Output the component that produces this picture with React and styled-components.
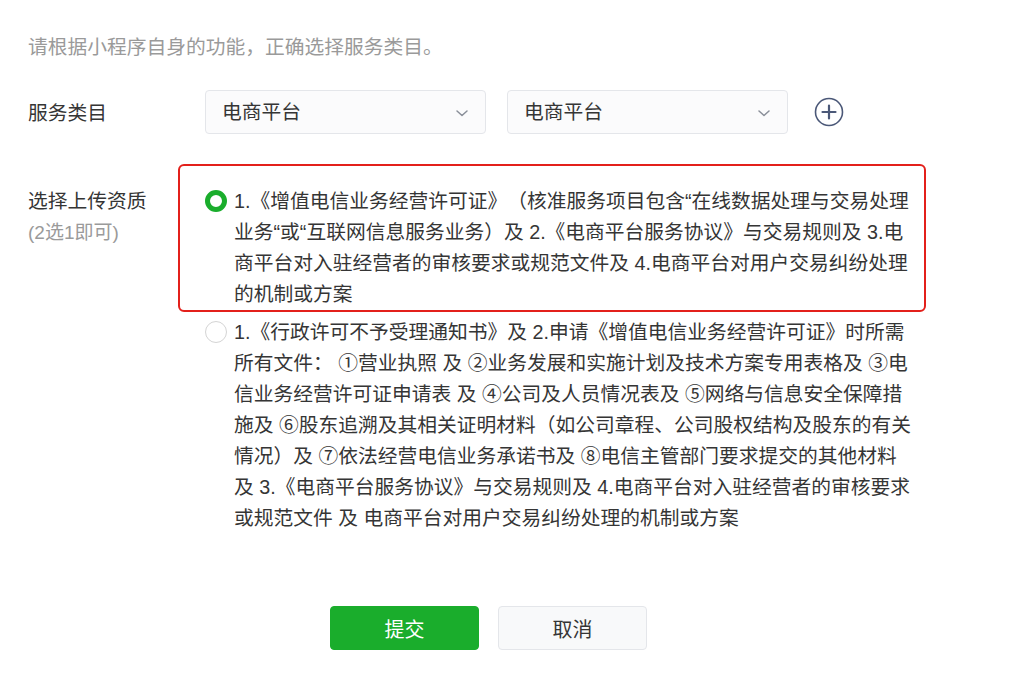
import styled, { createGlobalStyle } from 'styled-components';

const GlobalStyle = createGlobalStyle`
  html, body {
    margin: 0;
    padding: 0;
    background: #ffffff;
  }
  body {
    font-family: "Liberation Sans", "Noto Sans CJK SC", sans-serif;
    color: #353535;
    text-spacing-trim: space-all;
  }
`;

const optionOne = [
  '1.《增值电信业务经营许可证》（核准服务项目包含“在线数据处理与交易处理',
  '业务“或“互联网信息服务业务）及 2.《电商平台服务协议》与交易规则及 3.电',
  '商平台对入驻经营者的审核要求或规范文件及 4.电商平台对用户交易纠纷处理',
  '的机制或方案',
];

const optionTwo = [
  '1.《行政许可不予受理通知书》及 2.申请《增值电信业务经营许可证》时所需',
  '所有文件： ①营业执照 及 ②业务发展和实施计划及技术方案专用表格及 ③电',
  '信业务经营许可证申请表 及 ④公司及人员情况表及 ⑤网络与信息安全保障措',
  '施及 ⑥股东追溯及其相关证明材料（如公司章程、公司股权结构及股东的有关',
  '情况）及 ⑦依法经营电信业务承诺书及 ⑧电信主管部门要求提交的其他材料',
  '及 3.《电商平台服务协议》与交易规则及 4.电商平台对入驻经营者的审核要求',
  '或规范文件 及 电商平台对用户交易纠纷处理的机制或方案',
];

export default function App() {
  return (
    <Page>
      <GlobalStyle />
      <Intro>请根据小程序自身的功能，正确选择服务类目。</Intro>

      <CategoryRow>
        <Label $width="177px">服务类目</Label>
        <Selects>
          <Select>
            <span>电商平台</span>
            <Chevron />
          </Select>
          <Select>
            <span>电商平台</span>
            <Chevron />
          </Select>
          <AddButton aria-label="添加">
            <svg width="30" height="30" viewBox="0 0 30 30">
              <circle cx="15" cy="15" r="13.5" fill="none" stroke="#4b5878" strokeWidth="1.6" />
              <path d="M15 8.5v13M8.5 15h13" stroke="#4b5878" strokeWidth="2.2" strokeLinecap="round" />
            </svg>
          </AddButton>
        </Selects>
      </CategoryRow>

      <UploadRow>
        <UploadLabel>
          <Label>选择上传资质</Label>
          <Hint>(2选1即可)</Hint>
        </UploadLabel>
        <Options>
          <Option $highlight>
            <Radio $checked />
            <OptionText>
              {optionOne.map((line) => (
                <Line key={line}>{line}</Line>
              ))}
            </OptionText>
          </Option>
          <Option>
            <Radio />
            <OptionText>
              {optionTwo.map((line) => (
                <Line key={line}>{line}</Line>
              ))}
            </OptionText>
          </Option>
        </Options>
      </UploadRow>

      <Footer>
        <Button $primary>提交</Button>
        <Button>取消</Button>
      </Footer>
    </Page>
  );
}

function Chevron() {
  return (
    <svg width="14" height="10" viewBox="0 0 14 10">
      <path d="M2 3l5 4.5L12 3" fill="none" stroke="#8a8f99" strokeWidth="1.5" strokeLinecap="round" strokeLinejoin="round" />
    </svg>
  );
}

const Page = styled.div`
  padding: 33px 0 30px 28px;
  font-size: 19.75px;
`;

const Intro = styled.p`
  margin: 0;
  line-height: 28px;
  color: #9a9a9a;
`;

const CategoryRow = styled.div`
  display: flex;
  align-items: center;
  margin-top: 29px;
`;

const Label = styled.div`
  width: ${(p) => p.$width || 'auto'};
  flex: none;
  line-height: 31px;
  padding-top: 2px;
  color: #353535;
`;

const Selects = styled.div`
  display: flex;
  align-items: center;
  gap: 21px;
`;

const Select = styled.div`
  box-sizing: border-box;
  width: 281px;
  height: 44px;
  display: flex;
  align-items: center;
  justify-content: space-between;
  padding: 2px 16px 0 16px;
  border: 1px solid #e4e6ea;
  border-radius: 4px;
  background: #fbfbfc;
  color: #353535;
  line-height: 1;
`;

const AddButton = styled.div`
  display: flex;
  align-items: center;
  margin-left: 5px;
`;

const UploadRow = styled.div`
  display: flex;
  align-items: flex-start;
  margin-top: 30px;
`;

const UploadLabel = styled.div`
  width: 150px;
  flex: none;
  padding-top: 20px;
`;

const Hint = styled.div`
  line-height: 31px;
  font-size: 19px;
  color: #9a9a9a;
`;

const Options = styled.div`
  display: flex;
  flex-direction: column;
  gap: 5px;
`;

const Option = styled.div`
  box-sizing: border-box;
  width: 748px;
  display: flex;
  align-items: flex-start;
  gap: 7px;
  padding: ${(p) => (p.$highlight ? '20px 0 0 25px' : '0 0 0 27px')};
  border: ${(p) => (p.$highlight ? '2.5px solid #e3201b' : 'none')};
  border-radius: 6px;
`;

const Radio = styled.span`
  box-sizing: border-box;
  flex: none;
  width: 22px;
  height: 22px;
  margin-top: 4px;
  border-radius: 50%;
  border: ${(p) => (p.$checked ? '5px solid #1aad2c' : '1px solid #d4d4d4')};
  background: #fff;
`;

const OptionText = styled.div`
  line-height: 31px;
  color: #353535;
`;

const Line = styled.span`
  display: block;
  white-space: nowrap;
`;

const Footer = styled.div`
  display: flex;
  gap: 19px;
  margin-top: 72px;
  padding-left: 302px;
`;

const Button = styled.button`
  box-sizing: border-box;
  width: 149px;
  height: 44px;
  padding-top: 2px;
  border-radius: 4px;
  font-family: inherit;
  font-size: 20px;
  cursor: pointer;
  border: 1px solid ${(p) => (p.$primary ? '#1aad2c' : '#e4e6ea')};
  background: ${(p) => (p.$primary ? '#1aad2c' : '#f8f9fa')};
  color: ${(p) => (p.$primary ? '#ffffff' : '#353535')};
`;
